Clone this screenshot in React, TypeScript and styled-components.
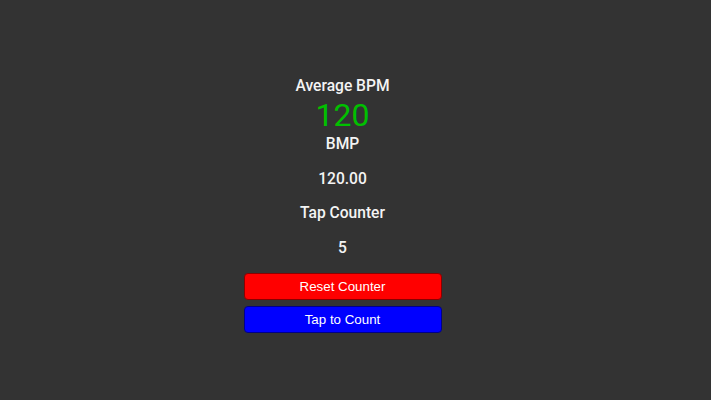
import React from "react";
import styled, { createGlobalStyle } from "styled-components";

const Global = createGlobalStyle`
  html, body { margin: 0; padding: 0; background: #333333; }
  body { font-family: Roboto, "Liberation Sans", sans-serif; }
`;

const Page = styled.main`
  min-height: 400px;
  box-sizing: border-box;
  padding: 77px 26px 0 0;
  display: flex;
  flex-direction: column;
  align-items: center;
  color: #f4f4f4;
`;

const Label = styled.div<{ $gap?: number }>`
  font-size: 15.6px;
  font-weight: 500;
  line-height: 19px;
  margin-top: ${(p) => p.$gap ?? 0}px;
`;

const BigValue = styled.div`
  font-size: 32px;
  line-height: 32px;
  color: #00c000;
  margin-top: 3px;
`;

const Buttons = styled.div`
  margin-top: 15px;
  display: flex;
  flex-direction: column;
  gap: 6px;
`;

const Button = styled.button<{ $bg: string; $border: string }>`
  width: 198px;
  height: 27px;
  border-radius: 4px;
  border: 1px solid ${(p) => p.$border};
  background: ${(p) => p.$bg};
  color: #ffffff;
  font-family: "Liberation Sans", Arial, sans-serif;
  font-size: 13.33px;
  padding: 0;
  cursor: pointer;
`;

export default function App() {
  return (
    <>
      <Global />
      <Page>
        <Label>Average BPM</Label>
        <BigValue>120</BigValue>
        <Label $gap={4}>BMP</Label>
        <Label $gap={16}>120.00</Label>
        <Label $gap={15}>Tap Counter</Label>
        <Label $gap={16}>5</Label>
        <Buttons>
          <Button $bg="#ff0000" $border="#8a0000">Reset Counter</Button>
          <Button $bg="#0000ff" $border="#00008a">Tap to Count</Button>
        </Buttons>
      </Page>
    </>
  );
}
